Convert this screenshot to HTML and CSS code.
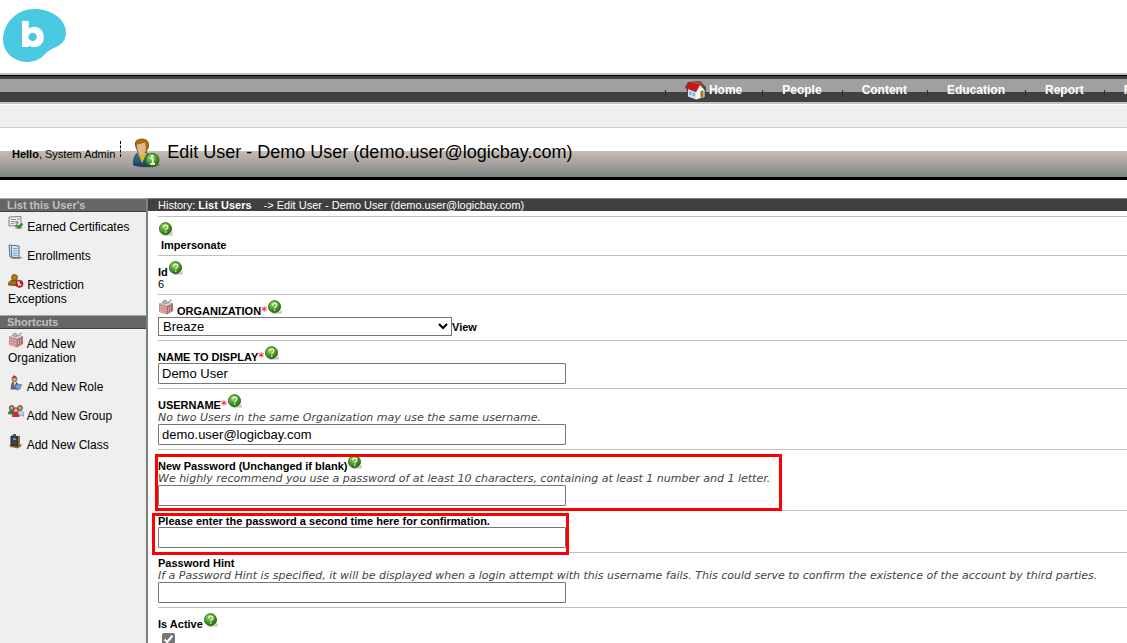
FILE: index.html
```
<!DOCTYPE html>
<html lang="en">
<head>
<meta charset="utf-8">
<title>Edit User - Demo User</title>
<link rel="stylesheet" href="styles.css">
</head>
<body>
<svg class="defs" aria-hidden="true">
  <defs>
    <radialGradient id="green" cx="40%" cy="30%" r="75%">
      <stop offset="0" stop-color="#a4dc6a"/><stop offset="0.5" stop-color="#4da428"/><stop offset="1" stop-color="#1d5a0a"/>
    </radialGradient>
    <linearGradient id="suit" x1="0" y1="0" x2="0" y2="1">
      <stop offset="0" stop-color="#3f78a8"/><stop offset="1" stop-color="#173f63"/>
    </linearGradient>
    <symbol id="help" viewBox="0 0 14 14">
      <path d="M4 13Q12 13.500 13.500 9.500V13.500H5Z" fill="#bcbcbc"/>
      <circle cx="6.500" cy="6.700" r="6.100" fill="url(#green)" stroke="#2c6418" stroke-width="0.8"/>
      <path d="M4.600 5.200Q4.700 3.200 6.800 3.200Q9 3.300 8.800 5.100Q8.600 6.200 7.400 6.800Q6.800 7.200 6.800 8.200" fill="none" stroke="#e9f6df" stroke-width="1.300"/>
      <circle cx="6.800" cy="10.100" r="0.8" fill="#e9f6df"/>
    </symbol>
    <symbol id="org" viewBox="0 0 16 16">
      <path d="M1 5L9 7V15.500L1 13Z" fill="#d08888"/>
      <path d="M9 7L15 4.500V12L9 15.500Z" fill="#b0696c"/>
      <path d="M1 5L7 2.500L15 4.500L9 7Z" fill="#dedede" stroke="#888" stroke-width="0.6"/>
      <path d="M5 4V2L8 1L9 3V4.500L7 5Z" fill="#b4b4b4" stroke="#777" stroke-width="0.5"/>
      <path d="M10 4.500L12 1.500L14 1" fill="none" stroke="#888"/>
      <path d="M2 7.500L8 9M2 10L8 11.600M2 12L8 13.800M10.500 8.500V13.600M12.500 7.500V12.600" stroke="#f2d8d8" stroke-width="0.8" stroke-dasharray="1.400 0.800"/>
    </symbol>
  </defs>
</svg>

<header class="brand">
  <svg class="logo" viewBox="0 0 64 54" role="img" aria-label="b">
    <path d="M32 0C47 0 63 9 63 24C63 33 56 37 49 40C41 43 40 53 23 53C10 52 0 43 0 30C1 13 14 0 32 0Z" fill="#4ac9e3"/>
    <path d="M19 12H25.700V19.500Q28 17.700 31 17.700C37 17.700 40.800 22 40.800 28C40.800 34 37 38.300 31 38.300Q28 38.300 25.700 36.500V38H19ZM29.600 23.700A4.200 4.200 0 1 0 29.600 32.100A4.200 4.200 0 1 0 29.600 23.700Z" fill="#fff" fill-rule="evenodd"/>
  </svg>
</header>

<div class="menubar">
  <nav class="menu">
    <a href="#" class="home"><svg class="house" viewBox="0 0 22 20" aria-hidden="true">
      <path d="M0 6L3 1L15 0L21 6V11L19 10V17L11 19L2 15V9Z" fill="#4a4644"/>
      <path d="M3 8L11 11V18.500L3 15.500Z" fill="#dfe2e4"/>
      <path d="M11 11L15 4L19.500 9V16L11 18.500Z" fill="#f4f4f2"/>
      <path d="M0.500 6.500L4 1.500L15 2.500L11 11Z" fill="#c61818"/>
      <path d="M4 1.500L14 0.700L20.500 7L15 3.500Z" fill="#dd3a36"/>
      <path d="M4 10L6.500 10.900V14.500L4 13.600ZM7.500 11.200L10 12V15.600L7.500 14.800Z" fill="#7db9dc"/>
      <path d="M15.500 10L18.500 9.500V16L15.500 16.800Z" fill="#a4742a"/>
    </svg>Home</a>
    <a href="#">People</a>
    <a href="#">Content</a>
    <a href="#">Education</a>
    <a href="#">Report</a>
    <a href="#">R</a>
  </nav>
</div>
<div class="submenu"></div>

<div class="titlebar">
  <p class="greeting"><b>Hello</b>, System Admin</p>
  <svg class="person" viewBox="0 0 28 30" aria-hidden="true">
    <ellipse cx="14" cy="27" rx="13" ry="2.500" fill="#6d6d6d" opacity="0.6"/>
    <path d="M0.500 27Q0 16 6 14.500H13Q19 17 20 28Q10 30 0.500 27Z" fill="url(#suit)" stroke="#18344c" stroke-width="0.7"/>
    <path d="M5 15L9 25L14 15Z" fill="#dcb91c"/>
    <path d="M2.500 8Q1 1 9 1Q16.500 1 15.500 9L13 14H5Z" fill="#b06c14" stroke="#593611" stroke-width="0.7"/>
    <path d="M4 6.500Q8 6 12 4.500Q14.500 16 9 17Q4 16 4 6.500Z" fill="#e2b894"/>
    <circle cx="19.300" cy="22" r="6.700" fill="url(#green)" stroke="#276012" stroke-width="0.8"/>
    <path d="M17.500 20.500H19.800V25.300M17.300 25.800H22" fill="none" stroke="#fff" stroke-width="1.700"/>
    <circle cx="19.300" cy="17.900" r="1.200" fill="#fff"/>
  </svg>
  <h1 class="title">Edit User - Demo User (demo.user@logicbay.com)</h1>
</div>

<div class="page">
  <aside class="sidebar">
    <h2 class="side-head">List this User's</h2>
    <ul class="side-list">
      <li><a href="#"><svg class="icon" viewBox="0 0 16 16" aria-hidden="true">
        <path d="M1 2L13 1.500V10L1 11Z" fill="#ececec" stroke="#777" stroke-width="0.9"/>
        <path d="M3 4.500H8M3 6.500H7M9 4H12M3 8.500H6" stroke="#8097a8"/>
        <circle cx="9" cy="7.500" r="1.800" fill="#bd8c8c"/>
        <path d="M6 11H14V14H8Z" fill="#aaa"/>
        <path d="M8 10L11 12.500L14.500 8.500" fill="none" stroke="#2c8c31" stroke-width="2"/>
      </svg> Earned Certificates</a></li>
      <li><a href="#"><svg class="icon" viewBox="0 0 16 16" aria-hidden="true">
        <path d="M5 13H15L12 15H3Z" fill="#999"/>
        <path d="M1 1L11 2V14L2 13Z" fill="#d5e8f5" stroke="#4e6e8c"/>
        <path d="M3.500 2V13" stroke="#527ca4"/>
        <path d="M5 4.500H9.500M5 7H9.500M5 9.500H9.500M5 11.700H9.500" stroke="#6e9fc4"/>
      </svg> Enrollments</a></li>
      <li><a href="#"><svg class="icon" viewBox="0 0 16 16" aria-hidden="true">
        <path d="M0.500 12Q0 8 5 7H8Q12 8 12 13Z" fill="#a8691c" stroke="#61400f" stroke-width="0.8"/>
        <circle cx="6.500" cy="4.500" r="3" fill="#b97820" stroke="#61400f" stroke-width="0.8"/>
        <circle cx="11.500" cy="10.800" r="3.600" fill="#c9202c" stroke="#8e1620" stroke-width="0.6"/>
        <path d="M9.500 9L13 12.500M11 8.500L10.500 12.500" stroke="#fff" stroke-width="1.300"/>
      </svg> Restriction Exceptions</a></li>
    </ul>
    <h2 class="side-head">Shortcuts</h2>
    <ul class="side-list">
      <li><a href="#"><svg class="icon" aria-hidden="true"><use href="#org"/></svg> Add New Organization</a></li>
      <li><a href="#"><svg class="icon" viewBox="0 0 16 16" aria-hidden="true">
        <path d="M3 14L4 8L7 6L10 9L9 14Z" fill="#68748c" stroke="#484848" stroke-width="0.8"/>
        <circle cx="6.500" cy="4" r="2.600" fill="#d9a27e" stroke="#77462c" stroke-width="0.7"/>
        <path d="M4 3L6 0L9 3Z" fill="#a83428"/>
        <path d="M6 7L6.500 11L8 7Z" fill="#fff"/>
        <path d="M7 10L13.500 9.500L12 14L9 15Z" fill="#78a8e0" stroke="#476d9a" stroke-width="0.7"/>
      </svg> Add New Role</a></li>
      <li><a href="#"><svg class="icon" viewBox="0 0 16 16" aria-hidden="true">
        <path d="M0 10Q0 6 4 6Q7 7 7 11Z" fill="#26843b"/>
        <path d="M9 11Q9 6 12.500 6Q16 7 16 12Z" fill="#b9d4ea" stroke="#587891" stroke-width="0.5"/>
        <circle cx="3.700" cy="4" r="2.400" fill="#cf9a78" stroke="#503521" stroke-width="0.9"/>
        <circle cx="12" cy="4" r="2.400" fill="#cf9a78" stroke="#503521" stroke-width="0.9"/>
        <path d="M4 13Q4 8 8 8Q11 8 11.500 13Z" fill="#d62a28"/>
        <circle cx="7.800" cy="6.300" r="2.500" fill="#e1ae88" stroke="#503521" stroke-width="0.9"/>
      </svg> Add New Group</a></li>
      <li><a href="#"><svg class="icon" viewBox="0 0 16 16" aria-hidden="true">
        <path d="M9 13L14 11L13 14L7 15Z" fill="#999"/>
        <path d="M2 12L10 13.500L12 11V13L10 15L2 13.500Z" fill="#b47a2e" stroke="#644015" stroke-width="0.6"/>
        <path d="M3 3L10 3.500V13L3 12Z" fill="#3c4248" stroke="#222"/>
        <path d="M10 3.500L12 2.500V11.500L10 13Z" fill="#9d6a2c"/>
        <path d="M5 3V1H8V3Z" fill="#555"/>
        <path d="M5 5.500H8V7H5Z" fill="#8e969c"/>
      </svg> Add New Class</a></li>
    </ul>
  </aside>

  <main class="content">
    <p class="history"><span>History: </span><a href="#">List Users</a><span class="crumb">-&gt; Edit User - Demo User (demo.user@logicbay.com)</span></p>
    <form class="form">
      <div class="row">
        <div class="label tall"><svg class="help" aria-hidden="true"><use href="#help"/></svg></div>
        <div class="value"><a href="#" class="action">Impersonate</a></div>
      </div>
      <div class="row">
        <div class="label tall"><span>Id</span><svg class="help" aria-hidden="true"><use href="#help"/></svg></div>
        <div class="value">6</div>
      </div>
      <div class="row">
        <div class="label tall"><svg class="org" aria-hidden="true"><use href="#org"/></svg><label for="org-field">ORGANIZATION<span class="req">*</span></label><svg class="help" aria-hidden="true"><use href="#help"/></svg></div>
        <div class="pick"><select id="org-field" class="select"><option>Breaze</option></select><a href="#">View</a></div>
      </div>
      <div class="row">
        <div class="label tall"><label for="name">NAME TO DISPLAY<span class="req">*</span></label><svg class="help" aria-hidden="true"><use href="#help"/></svg></div>
        <input id="name" class="field" type="text" value="Demo User">
      </div>
      <div class="row">
        <div class="label tall"><label for="username">USERNAME<span class="req">*</span></label><svg class="help" aria-hidden="true"><use href="#help"/></svg></div>
        <p class="hint">No two Users in the same Organization may use the same username.</p>
        <input id="username" class="field" type="text" value="demo.user@logicbay.com">
      </div>
      <div class="row">
        <div class="marked first">
          <div class="label tall"><label for="pw">New Password (Unchanged if blank)</label><svg class="help" aria-hidden="true"><use href="#help"/></svg></div>
          <p class="hint">We highly recommend you use a password of at least 10 characters, containing at least 1 number and 1 letter.</p>
          <input id="pw" class="field" type="password">
        </div>
      </div>
      <div class="row">
        <div class="marked second">
          <div class="label"><label for="pw2">Please enter the password a second time here for confirmation.</label></div>
          <input id="pw2" class="field" type="password">
        </div>
      </div>
      <div class="row">
        <div class="label"><label for="pwhint">Password Hint</label></div>
        <p class="hint">If a Password Hint is specified, it will be displayed when a login attempt with this username fails. This could serve to confirm the existence of the account by third parties.</p>
        <input id="pwhint" class="field" type="text">
      </div>
      <div class="row">
        <div class="label tall"><label for="active">Is Active</label><svg class="help" aria-hidden="true"><use href="#help"/></svg></div>
        <input id="active" class="check" type="checkbox" checked>
      </div>
    </form>
  </main>
</div>
</body>
</html>
```
FILE: styles.css
```
* { box-sizing: border-box; }
html, body { height: 100%; }
body {
  margin: 0;
  display: flex;
  flex-direction: column;
  overflow: hidden;
  background: #fff;
  color: #000;
  font-family: "Liberation Sans", Arial, sans-serif;
  font-size: 11px;
}
a { color: inherit; text-decoration: none; }
p, h1, h2, ul { margin: 0; padding: 0; }
svg { flex: none; }
.defs { position: absolute; width: 0; height: 0; }

.brand { flex: none; padding: 9px 3px 10px; }
.logo { display: block; width: 64px; height: 54px; }

.menubar {
  flex: none;
  border-top: 2px solid #c0c0c0;
  border-bottom: 2px solid #c4c4c4;
  background: linear-gradient(#000 1px, #404040 1px 4px, #a0a0a0 4px 17px, #404040 17px);
  overflow: hidden;
}
.menu { display: flex; margin-left: 59%; height: 27px; }
.menu a {
  display: flex;
  flex: none;
  padding: 0 20px;
  color: #fff;
  font-size: 12px;
  font-weight: bold;
  line-height: 30px;
  background: linear-gradient(#2c2c2c, #2c2c2c) 0 15px / 1px 7px no-repeat;
}
.house { width: 22px; height: 20px; margin: 6px 2px 0 0; }
.submenu { flex: none; height: 24px; border-top: 1px solid #fff; border-bottom: 1px solid #d6ccc4; background: #efefef; }

.titlebar {
  flex: none;
  display: flex;
  padding-left: 12px;
  border-bottom: 3px solid #000;
  background: linear-gradient(#fff 23px, #c6bdb6 23px, #a5a19d 36px, #858a89 46px, #858a89);
}
.greeting { height: 16px; margin-top: 13px; padding-right: 5px; border-right: 1px dashed #000; line-height: 26px; white-space: nowrap; }
.person { width: 28px; height: 30px; margin: 10px 0 9px 12px; }
.title { margin-left: 6px; font-size: 18px; font-weight: normal; line-height: 48px; height: 48px; white-space: nowrap; }

.page { flex: 1 0 auto; display: flex; margin-top: 18px; }
.sidebar { flex: none; width: 148px; border-right: 2px solid #808080; background: #efefef; }
.side-head {
  height: 14px;
  padding-left: 7px;
  border-top: 1px solid #a8a8a8;
  border-bottom: 1px solid #404040;
  background: #666;
  color: #c0c0c0;
  font-size: 11px;
  line-height: 13px;
}
.side-list { list-style: none; padding-bottom: 2px; font-size: 12px; line-height: 14px; }
.side-list li { padding: 8px 16px 7px 8px; }
.icon { width: 16px; height: 16px; margin-top: -8px; }

.content { flex: 1; min-width: 0; }
.history { height: 13px; padding-left: 10px; border-top: 1px solid #808080; background: #404040; color: #fff; line-height: 13px; white-space: pre; }
.history a { font-weight: bold; }
.crumb { margin-left: 12px; }
.form { padding: 5px 0 0 10px; }
.row { padding: 4px 0; border-top: 1px solid #c0c0c0; }
.label { display: flex; align-items: flex-end; height: 12px; font-weight: bold; line-height: 12px; }
.tall { height: 18px; }
.help { align-self: flex-start; width: 14px; height: 14px; margin: 1px 0 0 1px; }
.org { align-self: flex-start; width: 16px; height: 16px; margin-right: 3px; }
.req { color: #f00; font: 12px/1 "DejaVu Sans", Verdana, sans-serif; }
.value { line-height: 12px; }
.action { margin-left: 3px; font-weight: bold; }
.pick { display: flex; align-items: center; font-weight: bold; }
.select { width: 294px; height: 19px; padding: 0; border: 1px solid #767676; border-radius: 0; background: #fff; color: #000; font: 13px "Liberation Sans", Arial, sans-serif; }
.field { display: block; width: 408px; height: 21px; padding: 1px 3px; border: 1px solid #767676; border-radius: 1px; background: #fff; color: #000; font: 13px "Liberation Sans", Arial, sans-serif; }
.hint { padding-top: 1px; color: #444; font: italic 11px/12px "DejaVu Sans", Verdana, sans-serif; white-space: nowrap; }
.check { display: block; width: 13px; height: 13px; margin: 3px 4px; accent-color: #767676; }

.marked { position: relative; width: fit-content; }
.marked::after { content: ""; position: absolute; border: 3px solid #f00; pointer-events: none; }
.first::after { inset: 0 -12px -5px -3px; }
.second::after { inset: -2px -3px -7px -6px; }
```
